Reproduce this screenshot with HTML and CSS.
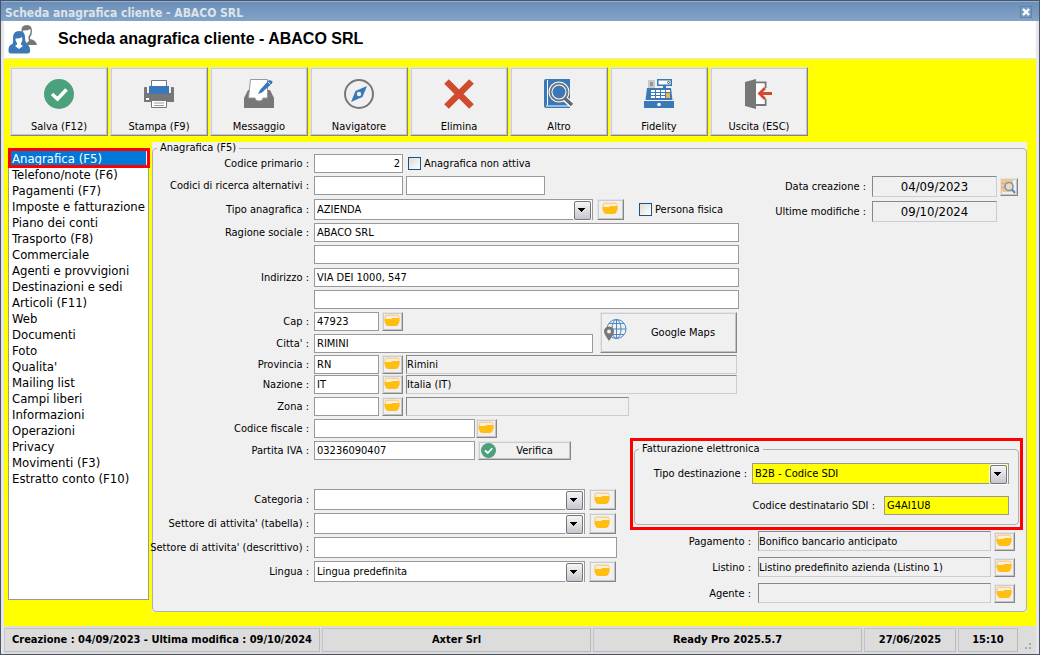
FILE: index.html
```html
<!DOCTYPE html>
<html lang="it">
<head>
<meta charset="UTF-8">
<meta name="viewport" content="width=device-width, initial-scale=1.0">
<title>Scheda anagrafica cliente - ABACO SRL</title>
<link rel="stylesheet" href="styles.css">
</head>
<body>

<!-- shared icons -->
<svg class="defs" width="0" height="0">
  <symbol id="folder" viewBox="0 0 16 13">
    <path d="M.5 3Q.5 .5 3 .5H13Q15.500 .5 15.500 3V8H.5Z" fill="#fbcf94"/>
    <path d="M2 3Q2 2 3 2H13Q14.500 2 14.500 3V6H2Z" fill="#fff0dc"/>
    <path d="M.5 5H6Q7 5 7.500 4.500T9 4H15.500V7L14.800 9.500Q14 12 11.500 12H4.500Q2 12 1.200 9.500L.5 7Z" fill="#ffbe10"/>
  </symbol>
  <symbol id="check" viewBox="0 0 30 30">
    <circle cx="15" cy="15" r="15" fill="#4aa17c"/>
    <path d="M8 15L13.500 20L22.500 10.500" fill="none" stroke="#fff" stroke-width="3.600"/>
  </symbol>
</svg>

<div class="window">
  <header class="titlebar">
    <span>Scheda anagrafica cliente - ABACO SRL</span>
    <button type="button" class="close" aria-label="Chiudi">
      <svg width="8" height="8" viewBox="0 0 8 8"><path d="M1 1L7 7M7 1L1 7" stroke="#fff" stroke-width="2.400"/></svg>
    </button>
  </header>

  <div class="heading">
    <svg width="30" height="30" viewBox="0 0 30 30">
      <path d="M13.500 7Q13 1 19 1Q24 1 24 7Q24 11 22 13V15Q28 16 29 21H18L14 14Z" fill="#777"/>
      <path d="M15 6.500Q19 7 22.500 5Q23 10 20.500 12.500V15L21 17L18 19L16 13.500Q15 10 15 6.500Z" fill="#fff"/>
      <path d="M4.500 20Q5.500 17 5 13Q5.500 7 11 7Q17 7 17 13Q17 17 18 20Q22 21 22 26V27.500Q22 29.500 19.500 29.500H3Q.5 29.500 .5 27.500V26Q.5 21 4.500 20Z" fill="#3a78b8"/>
      <path d="M7.500 14.500Q11 15 14 13Q15 17 13 19V20.500L15 22L11 25L7 22L9 20.500V19Q7 17 7.500 14.500Z" fill="#fff"/>
    </svg>
    <h1>Scheda anagrafica cliente - ABACO SRL</h1>
  </div>

  <main class="content">
    <div class="toolbar">
      <button type="button">
        <svg viewBox="0 0 30 30"><use href="#check"/></svg>
        Salva (F12)
      </button>
      <button type="button">
        <svg viewBox="0 0 30 30">
          <path d="M0 9Q0 8 1 8H3V14H27V8H29Q30 8 30 9V23H0Z" fill="#777"/>
          <path d="M7.500 7V1.500H22.500V7" fill="#fff" stroke="#777"/>
          <path d="M5 7H25V15H5Z" fill="#3a78b8"/>
          <path d="M7.500 21.500H22.500V28.500H7.500Z" fill="#fff" stroke="#777"/>
          <path d="M10 24H20M10 26.500H20" stroke="#999"/>
          <path d="M2 19H5V21H2Z" fill="#fff"/>
        </svg>
        Stampa (F9)
      </button>
      <button type="button">
        <svg viewBox="0 0 30 30">
          <path d="M4 11H26L30 19V29H0V19Z" fill="#777"/>
          <path d="M6.500 .5H23.500V19H19Q19 22 15 22T11 19H4.500Z" fill="#fff" stroke="#999"/>
          <path d="M14 15L16 11L25 1L28.500 2L28 4.500L18 13.500Z" fill="#3a78b8"/>
          <path d="M24 3L26.500 5.500" stroke="#dce8f4"/>
        </svg>
        Messaggio
      </button>
      <button type="button">
        <svg viewBox="0 0 30 30">
          <circle cx="15" cy="15" r="14" fill="#f0f0f0" stroke="#777" stroke-width="2"/>
          <path d="M23 7L18.500 18L7 23L11.500 12Z" fill="#3a78b8"/>
          <circle cx="15" cy="15" r="2.200" fill="#f0f0f0"/>
        </svg>
        Navigatore
      </button>
      <button type="button">
        <svg viewBox="0 0 30 30">
          <path d="M2.500 2.500L27.500 27.500M27.500 2.500L2.500 27.500" stroke="#d04a30" stroke-width="6.500"/>
        </svg>
        Elimina
      </button>
      <button type="button">
        <svg viewBox="0 0 30 30">
          <path d="M2 0H26V29H2Q0 29 0 27V2Q0 0 2 0Z" fill="#3a78b8"/>
          <path d="M3.500 1V26M2 27H25" stroke="#fff"/>
          <circle cx="15" cy="13" r="8.500" fill="#3a78b8" stroke="#fff" stroke-width="4"/>
          <path d="M20 19L28 26" stroke="#fff" stroke-width="6"/>
          <circle cx="15" cy="13" r="8.500" fill="none" stroke="#777" stroke-width="2"/>
          <path d="M21 19.500L28 26" stroke="#666" stroke-width="3.400"/>
        </svg>
        Altro
      </button>
      <button type="button">
        <svg viewBox="0 0 30 30">
          <path d="M3 9H27L28.500 21H1.500Z" fill="#3a78b8"/>
          <path d="M0 22H30V29H0Z" fill="#3a78b8"/>
          <path d="M4 1H11V9H4Z" fill="#c9c9c9"/>
          <path d="M6 4H9M6 6H9" stroke="#666"/>
          <path d="M13 0H28V7H13Z" fill="#3a78b8"/>
          <path d="M14.500 1.500H26.500V5.500H14.500Z" fill="#fff"/>
          <path d="M19 6H22V10H19Z" fill="#3a78b8"/>
          <circle cx="24.500" cy="3.500" r="1" fill="none" stroke="#555"/>
          <path d="M7 11H26V19H7Z" fill="#fff"/>
          <path d="M7 13.500H26M7 16.500H26M11.500 11V19M16.500 11V19M21.500 11V19" stroke="#3a78b8"/>
          <path d="M22 14H26V19H22Z" fill="#f8b050"/>
          <circle cx="15" cy="25.500" r="1.800" fill="#fff"/>
        </svg>
        Fidelity
      </button>
      <button type="button">
        <svg viewBox="0 0 30 30">
          <path d="M12 3.500H21.500V9M21.500 20V26H12" fill="#fff" stroke="#777" stroke-width="2"/>
          <path d="M12 4.500H20.500V25H12Z" fill="#fff"/>
          <path d="M1 3L12 0V30L1 27Z" fill="#777"/>
          <path d="M28 14.500H16M21 9L15.500 14.500L21 20" fill="none" stroke="#d04a30" stroke-width="2.800"/>
        </svg>
        Uscita (ESC)
      </button>
    </div>

    <div class="columns">
      <nav class="sections">
        <a href="#" class="selected">Anagrafica (F5)</a>
        <a href="#">Telefono/note (F6)</a>
        <a href="#">Pagamenti (F7)</a>
        <a href="#">Imposte e fatturazione</a>
        <a href="#">Piano dei conti</a>
        <a href="#">Trasporto (F8)</a>
        <a href="#">Commerciale</a>
        <a href="#">Agenti e provvigioni</a>
        <a href="#">Destinazioni e sedi</a>
        <a href="#">Articoli (F11)</a>
        <a href="#">Web</a>
        <a href="#">Documenti</a>
        <a href="#">Foto</a>
        <a href="#">Qualita'</a>
        <a href="#">Mailing list</a>
        <a href="#">Campi liberi</a>
        <a href="#">Informazioni</a>
        <a href="#">Operazioni</a>
        <a href="#">Privacy</a>
        <a href="#">Movimenti (F3)</a>
        <a href="#">Estratto conto (F10)</a>
      </nav>

      <form class="panel">
        <fieldset class="group">
          <legend>Anagrafica (F5)</legend>

          <div class="split">
            <div class="fields">
              <div class="block">
                <div class="row">
                  <label class="name" for="codice">Codice primario :</label>
                  <input class="code number" type="text" id="codice" value="2">
                  <label class="tick"><input type="checkbox"> Anagrafica non attiva</label>
                </div>
                <div class="row">
                  <label class="name" for="alt1">Codici di ricerca alternativi :</label>
                  <input class="code" type="text" id="alt1">
                  <input class="alt" type="text" aria-label="Codice alternativo 2">
                </div>
              </div>

              <div class="block">
                <div class="row">
                  <label class="name" for="tipo">Tipo anagrafica :</label>
                  <span class="combo wide"><select id="tipo"><option>AZIENDA</option></select></span>
                  <button type="button" class="pick large" aria-label="Scegli tipo"><svg><use href="#folder"/></svg></button>
                  <label class="tick person"><input type="checkbox"> Persona fisica</label>
                </div>
                <div class="row">
                  <label class="name" for="ragione">Ragione sociale :</label>
                  <input class="fill" type="text" id="ragione" value="ABACO SRL">
                </div>
                <div class="row">
                  <span class="name"></span>
                  <input class="fill" type="text" aria-label="Ragione sociale 2">
                </div>
              </div>

              <div class="block">
                <div class="row">
                  <label class="name" for="indirizzo">Indirizzo :</label>
                  <input class="fill" type="text" id="indirizzo" value="VIA DEI 1000, 547">
                </div>
                <div class="row">
                  <span class="name"></span>
                  <input class="fill" type="text" aria-label="Indirizzo 2">
                </div>
                <div class="city">
                  <div class="block">
                    <div class="row">
                      <label class="name" for="cap">Cap :</label>
                      <input class="short" type="text" id="cap" value="47923">
                      <button type="button" class="pick" aria-label="Scegli cap"><svg><use href="#folder"/></svg></button>
                    </div>
                    <div class="row">
                      <label class="name" for="citta">Citta' :</label>
                      <input class="fill" type="text" id="citta" value="RIMINI">
                    </div>
                  </div>
                  <button type="button" class="maps">
                    <svg width="24" height="24" viewBox="0 0 24 24">
                      <g fill="none" stroke="#4a88c4">
                        <circle cx="13.500" cy="11" r="9.500"/>
                        <ellipse cx="13.500" cy="11" rx="4.500" ry="9.500"/>
                        <path d="M13.500 1.500V20.500M4 11H23M6 5.500H21M6 16.500H21"/>
                      </g>
                      <path d="M6 8.500Q11 9 11 13.500Q11 16 6 23Q1 16 1 13.500Q1 9 6 8.500Z" fill="#777"/>
                      <circle cx="6" cy="13.500" r="2" fill="#f0f0f0"/>
                    </svg>
                    <span>Google Maps</span>
                  </button>
                </div>
              </div>

              <div class="block tight">
                <div class="row">
                  <label class="name" for="prov">Provincia :</label>
                  <input class="short" type="text" id="prov" value="RN">
                  <button type="button" class="pick" aria-label="Scegli provincia"><svg><use href="#folder"/></svg></button>
                  <input class="sunken fill" type="text" value="Rimini" aria-label="Nome provincia" readonly>
                </div>
                <div class="row">
                  <label class="name" for="nazione">Nazione :</label>
                  <input class="short" type="text" id="nazione" value="IT">
                  <button type="button" class="pick" aria-label="Scegli nazione"><svg><use href="#folder"/></svg></button>
                  <input class="sunken fill" type="text" value="Italia (IT)" aria-label="Nome nazione" readonly>
                </div>
              </div>

              <div class="row">
                <label class="name" for="zona">Zona :</label>
                <input class="short" type="text" id="zona">
                <button type="button" class="pick" aria-label="Scegli zona"><svg><use href="#folder"/></svg></button>
                <input class="sunken zone" type="text" aria-label="Nome zona" readonly>
              </div>
            </div>

            <div class="dates">
              <div class="row">
                <label for="creata">Data creazione :</label>
                <input class="sunken date" type="text" id="creata" value="04/09/2023" readonly>
                <button type="button" class="pick log" aria-label="Cronologia">
                  <svg viewBox="0 0 16 16">
                    <path d="M1 3Q1 1 7 1T13 3V12Q13 14 7 14T1 12Z" fill="#f3c58c"/>
                    <path d="M1 5Q7 8 13 5M1 9Q7 12 13 9" fill="none" stroke="#e9ad68"/>
                    <circle cx="9" cy="8.500" r="4" fill="#f5d9b4" stroke="#6c9ccb" stroke-width="1.600"/>
                    <path d="M12 11.500L15 15" stroke="#5588bb" stroke-width="2"/>
                  </svg>
                </button>
              </div>
              <div class="row">
                <label for="modificata">Ultime modifiche :</label>
                <input class="sunken date" type="text" id="modificata" value="09/10/2024" readonly>
              </div>
            </div>
          </div>

          <div class="split lower">
            <div class="fields">
              <div class="block">
                <div class="row">
                  <label class="name" for="cf">Codice fiscale :</label>
                  <input class="fiscal" type="text" id="cf">
                  <button type="button" class="pick" aria-label="Scegli codice fiscale"><svg><use href="#folder"/></svg></button>
                </div>
                <div class="row">
                  <label class="name" for="piva">Partita IVA :</label>
                  <input class="fiscal" type="text" id="piva" value="03236090407">
                  <button type="button" class="verify">
                    <svg width="15" height="15"><use href="#check"/></svg>
                    <span>Verifica</span>
                  </button>
                </div>
              </div>

              <div class="block extra">
                <div class="row">
                  <label class="name" for="categoria">Categoria :</label>
                  <span class="combo"><select id="categoria"><option></option></select></span>
                  <button type="button" class="pick large" aria-label="Scegli categoria"><svg><use href="#folder"/></svg></button>
                </div>
                <div class="row">
                  <label class="name" for="settore">Settore di attivita' (tabella) :</label>
                  <span class="combo"><select id="settore"><option></option></select></span>
                  <button type="button" class="pick large" aria-label="Scegli settore"><svg><use href="#folder"/></svg></button>
                </div>
                <div class="row">
                  <label class="name" for="descr">Settore di attivita' (descrittivo) :</label>
                  <input class="tall" type="text" id="descr">
                </div>
                <div class="row">
                  <label class="name" for="lingua">Lingua :</label>
                  <span class="combo"><select id="lingua"><option>Lingua predefinita</option></select></span>
                  <button type="button" class="pick large" aria-label="Scegli lingua"><svg><use href="#folder"/></svg></button>
                </div>
              </div>
            </div>

            <div class="billing">
              <div class="highlight">
                <fieldset class="group invoice">
                  <legend>Fatturazione elettronica</legend>
                  <div class="row">
                    <label for="dest">Tipo destinazione :</label>
                    <span class="combo yellow"><select id="dest"><option>B2B - Codice SDI</option></select></span>
                  </div>
                  <div class="row">
                    <label for="sdi">Codice destinatario SDI :</label>
                    <input class="sdi yellow" type="text" id="sdi" value="G4AI1U8">
                  </div>
                </fieldset>
              </div>
              <div class="terms">
                <div class="row">
                  <label for="pagamento">Pagamento :</label>
                  <input class="sunken term" type="text" id="pagamento" value="Bonifico bancario anticipato" readonly>
                  <button type="button" class="pick" aria-label="Scegli pagamento"><svg><use href="#folder"/></svg></button>
                </div>
                <div class="row">
                  <label for="listino">Listino :</label>
                  <input class="sunken term" type="text" id="listino" value="Listino predefinito azienda (Listino 1)" readonly>
                  <button type="button" class="pick" aria-label="Scegli listino"><svg><use href="#folder"/></svg></button>
                </div>
                <div class="row">
                  <label for="agente">Agente :</label>
                  <input class="sunken term" type="text" id="agente" readonly>
                  <button type="button" class="pick" aria-label="Scegli agente"><svg><use href="#folder"/></svg></button>
                </div>
              </div>
            </div>
          </div>
        </fieldset>
      </form>
    </div>
  </main>

  <footer class="statusbar">
    <div class="dates-info">Creazione : 04/09/2023 - Ultima modifica : 09/10/2024</div>
    <div class="grow">Axter Srl</div>
    <div class="grow">Ready Pro 2025.5.7</div>
    <div class="today">27/06/2025</div>
    <div class="clock">15:10</div>
    <svg class="grip" width="10" height="10" viewBox="0 0 10 10"><path d="M6 1H8V3H6ZM6 5H8V7H6ZM2 5H4V7H2Z" fill="#aaa"/></svg>
  </footer>
</div>

</body>
</html>
```

FILE: styles.css
```css
* {
  box-sizing: border-box;
}

body {
  margin: 0;
  font-family: "DejaVu Sans Condensed", Tahoma, sans-serif;
  font-size: 11px;
  line-height: 13px;
  color: #000;
}

input,
select,
button {
  font: inherit;
  color: inherit;
  margin: 0;
}

.defs {
  position: absolute;
}

.window {
  display: flex;
  flex-direction: column;
  min-height: 100vh;
  border: 1px solid #4c5565;
  background: #e6e6ea;
}

.titlebar {
  display: flex;
  justify-content: space-between;
  align-items: center;
  height: 20px;
  padding: 4px 7px 0 4px;
  border-top: 1px solid #8fb0d4;
  background: linear-gradient(#6b8fb8, #83a3c7);
  color: #dde3ea;
  font-size: 12px;
  font-weight: bold;
}

.close {
  display: flex;
  align-items: center;
  justify-content: center;
  width: 12px;
  height: 12px;
  margin-bottom: 4px;
  padding: 0;
  border: 1px solid #5c83ab;
  background: #7a9cc0;
}

.heading {
  display: flex;
  align-items: center;
  gap: 20px;
  height: 37px;
  margin: 0 3px;
  padding: 0 0 2px 4px;
  background: #fff;
}

h1 {
  margin: 0;
  font: bold 16px/20px "Liberation Sans", Arial, sans-serif;
}

.content {
  flex: 1;
  margin: 1px 3px 0;
  padding: 8px 9px 14px 4px;
  background: #ff0;
}

/* toolbar */

.toolbar {
  display: flex;
  gap: 2px;
  padding-left: 2px;
}

.toolbar button {
  display: flex;
  flex-direction: column;
  align-items: center;
  justify-content: space-between;
  width: 98px;
  height: 69px;
  padding: 11px 0 2px;
}

.toolbar svg {
  width: 30px;
  height: 30px;
}

.toolbar button,
.pick,
.maps,
.verify {
  border: 1px solid;
  border-color: #e4e4e4 #858585 #858585 #e4e4e4;
  background: #f0f0f0;
  box-shadow: inset 1px 1px #cbcbd0, inset -1px -1px #c4c4c4;
}

/* section list */

.columns {
  display: flex;
  align-items: flex-start;
  gap: 3px;
  margin-top: 6px;
}

.sections {
  display: flex;
  flex-direction: column;
  flex: none;
  width: 141px;
  min-height: 452px;
  margin-top: 6px;
  padding: 2px;
  border: 1px solid #999;
  background: #fff;
  font-size: 13px;
  line-height: 16px;
}

.sections a {
  padding-left: 1px;
  color: #000;
  text-decoration: none;
  white-space: nowrap;
}

.sections .selected {
  position: relative;
  background: #0078d7;
  color: #fff;
}

.sections .selected::after {
  content: "";
  position: absolute;
  inset: -3px -4px -1px -3px;
  border: 3px solid #f00;
}

/* form */

.panel {
  flex: 1;
  min-width: 0;
  min-height: 470px;
  display: flex;
  background: #f0f0f0;
}

.group {
  flex: 1;
  min-width: 0;
  margin: 0;
  padding: 0;
  border: 1px solid #b0b0b0;
  border-radius: 4px;
}

legend {
  margin-left: 4px;
  padding: 0 3px;
  line-height: 12px;
}

.split {
  display: flex;
}

.fields {
  flex: 1;
  display: flex;
  flex-direction: column;
  gap: 4px;
}

.block {
  display: flex;
  flex-direction: column;
  gap: 3px;
}

.block.tight {
  gap: 1px;
  margin: -2px 0 -1px;
  padding-right: 2px;
}

.row {
  display: flex;
  align-items: center;
  gap: 3px;
}

.row label {
  white-space: nowrap;
}

.row .name {
  display: flex;
  justify-content: flex-end;
  flex: none;
  width: 156px;
  margin-right: 2px;
}

input[type="text"] {
  height: 19px;
  min-width: 0;
  padding: 0 2px;
  border: 1px solid #999;
  background: #fff;
}

.fill {
  flex: 1;
}

input.code {
  width: 89px;
}

input.alt {
  width: 139px;
}

input.short {
  width: 65px;
}

input.fiscal {
  width: 161px;
}

input.number {
  text-align: right;
}

input[type="text"].tall {
  width: 303px;
  height: 21px;
}

input.zone {
  width: 223px;
}

input[type="text"].sunken {
  padding: 0;
  border-color: #888 #ccccd4 #ccccd4 #888;
  background: #f0f0f0;
}

.tick {
  display: flex;
  align-items: center;
  gap: 3px;
  margin-left: 2px;
}

.tick input {
  appearance: none;
  width: 13px;
  height: 13px;
  border: 1px solid #1c5180;
  background: linear-gradient(135deg, #dcdcd7, #fff);
}

.person {
  margin-left: 12px;
}

.combo {
  position: relative;
  width: 271px;
  height: 21px;
}

.combo.wide {
  width: 279px;
}

.combo select {
  appearance: none;
  display: block;
  width: 100%;
  height: 21px;
  padding: 0 18px 0 2px;
  border: 1px solid #999;
  border-radius: 0;
  background: #fff;
}

.combo::after {
  content: "";
  position: absolute;
  top: 2px;
  right: 2px;
  width: 15px;
  height: 17px;
  border: 1px solid #777;
  border-radius: 2px;
  background:
    linear-gradient(#000, #000) 3px 6px / 7px 1px no-repeat,
    linear-gradient(#000, #000) 4px 7px / 5px 1px no-repeat,
    linear-gradient(#000, #000) 5px 8px / 3px 1px no-repeat,
    linear-gradient(#000, #000) 6px 9px / 1px 1px no-repeat,
    linear-gradient(#f6f6f8, #c6c6ce);
  box-shadow: 0 0 0 1px #fff;
  pointer-events: none;
}

.yellow select,
input[type="text"].yellow {
  background: #ff0;
}

.pick {
  display: flex;
  align-items: center;
  justify-content: center;
  flex: none;
  width: 21px;
  height: 19px;
  padding: 0 2px 2px 0;
}

.pick svg {
  width: 16px;
  height: 13px;
}

.pick.large {
  width: 27px;
  height: 21px;
}

.combo + .pick {
  margin-left: 1px;
}

.fiscal + .pick {
  margin-left: -2px;
}

.city {
  display: flex;
  gap: 7px;
  padding-right: 2px;
}

.city .block {
  flex: 1;
}

.maps {
  display: flex;
  align-items: center;
  width: 137px;
  height: 41px;
  padding: 2px;
}

.maps span,
.verify span {
  flex: 1;
  padding-left: 5px;
}

.maps svg {
  margin-bottom: 6px;
}

.verify {
  display: flex;
  align-items: center;
  width: 93px;
  height: 19px;
  padding: 0 2px;
}

.dates {
  display: flex;
  flex-direction: column;
  gap: 4px;
  width: 287px;
  padding: 22px 29px 0 0;
}

.dates .row {
  gap: 6px;
}

.dates label {
  flex: 1;
  text-align: right;
}

input[type="text"].date {
  width: 125px;
  height: 21px;
  font-size: 13px;
  text-align: center;
}

.log {
  width: 18px;
  height: 18px;
  margin: 0 -21px 0 -3px;
}

.pick.log svg {
  width: 16px;
  height: 16px;
  flex: none;
}

.lower {
  margin-top: 3px;
}

.extra {
  margin-top: 25px;
}

.billing {
  width: 396px;
  padding: 19px 3px 0 0;
}

/* frame around the e-invoicing data */
.highlight {
  padding: 2px 1px;
  border: 3px solid #f00;
}

.invoice {
  display: flex;
  flex-direction: column;
  gap: 12px;
  padding: 8px 0 9px;
}

.invoice .combo {
  width: 257px;
}

.invoice .row {
  justify-content: flex-end;
  gap: 5px;
  padding-right: 9px;
}

input.sdi {
  width: 125px;
  margin-left: 4px;
}

.terms {
  display: flex;
  flex-direction: column;
  align-items: flex-end;
  gap: 6px;
  padding: 1px 8px 0 0;
}

.terms label {
  margin-right: 4px;
}

input[type="text"].term {
  width: 233px;
  height: 20px;
}

/* status bar */

.statusbar {
  display: flex;
  gap: 2px;
  height: 28px;
  margin: 0 3px;
  padding: 2px 0;
  background: #dcdcdc;
  font-size: 11px;
  font-weight: bold;
  line-height: 22px;
  text-align: center;
  white-space: nowrap;
}

.statusbar div {
  border: 1px solid;
  border-color: #c4c4c8 #bbb #bbb #c4c4c8;
}

.dates-info {
  width: 316px;
}

.grow {
  flex: 1;
}

.today {
  width: 92px;
}

.clock {
  width: 60px;
}

.grip {
  width: 16px;
  align-self: flex-end;
}
```
